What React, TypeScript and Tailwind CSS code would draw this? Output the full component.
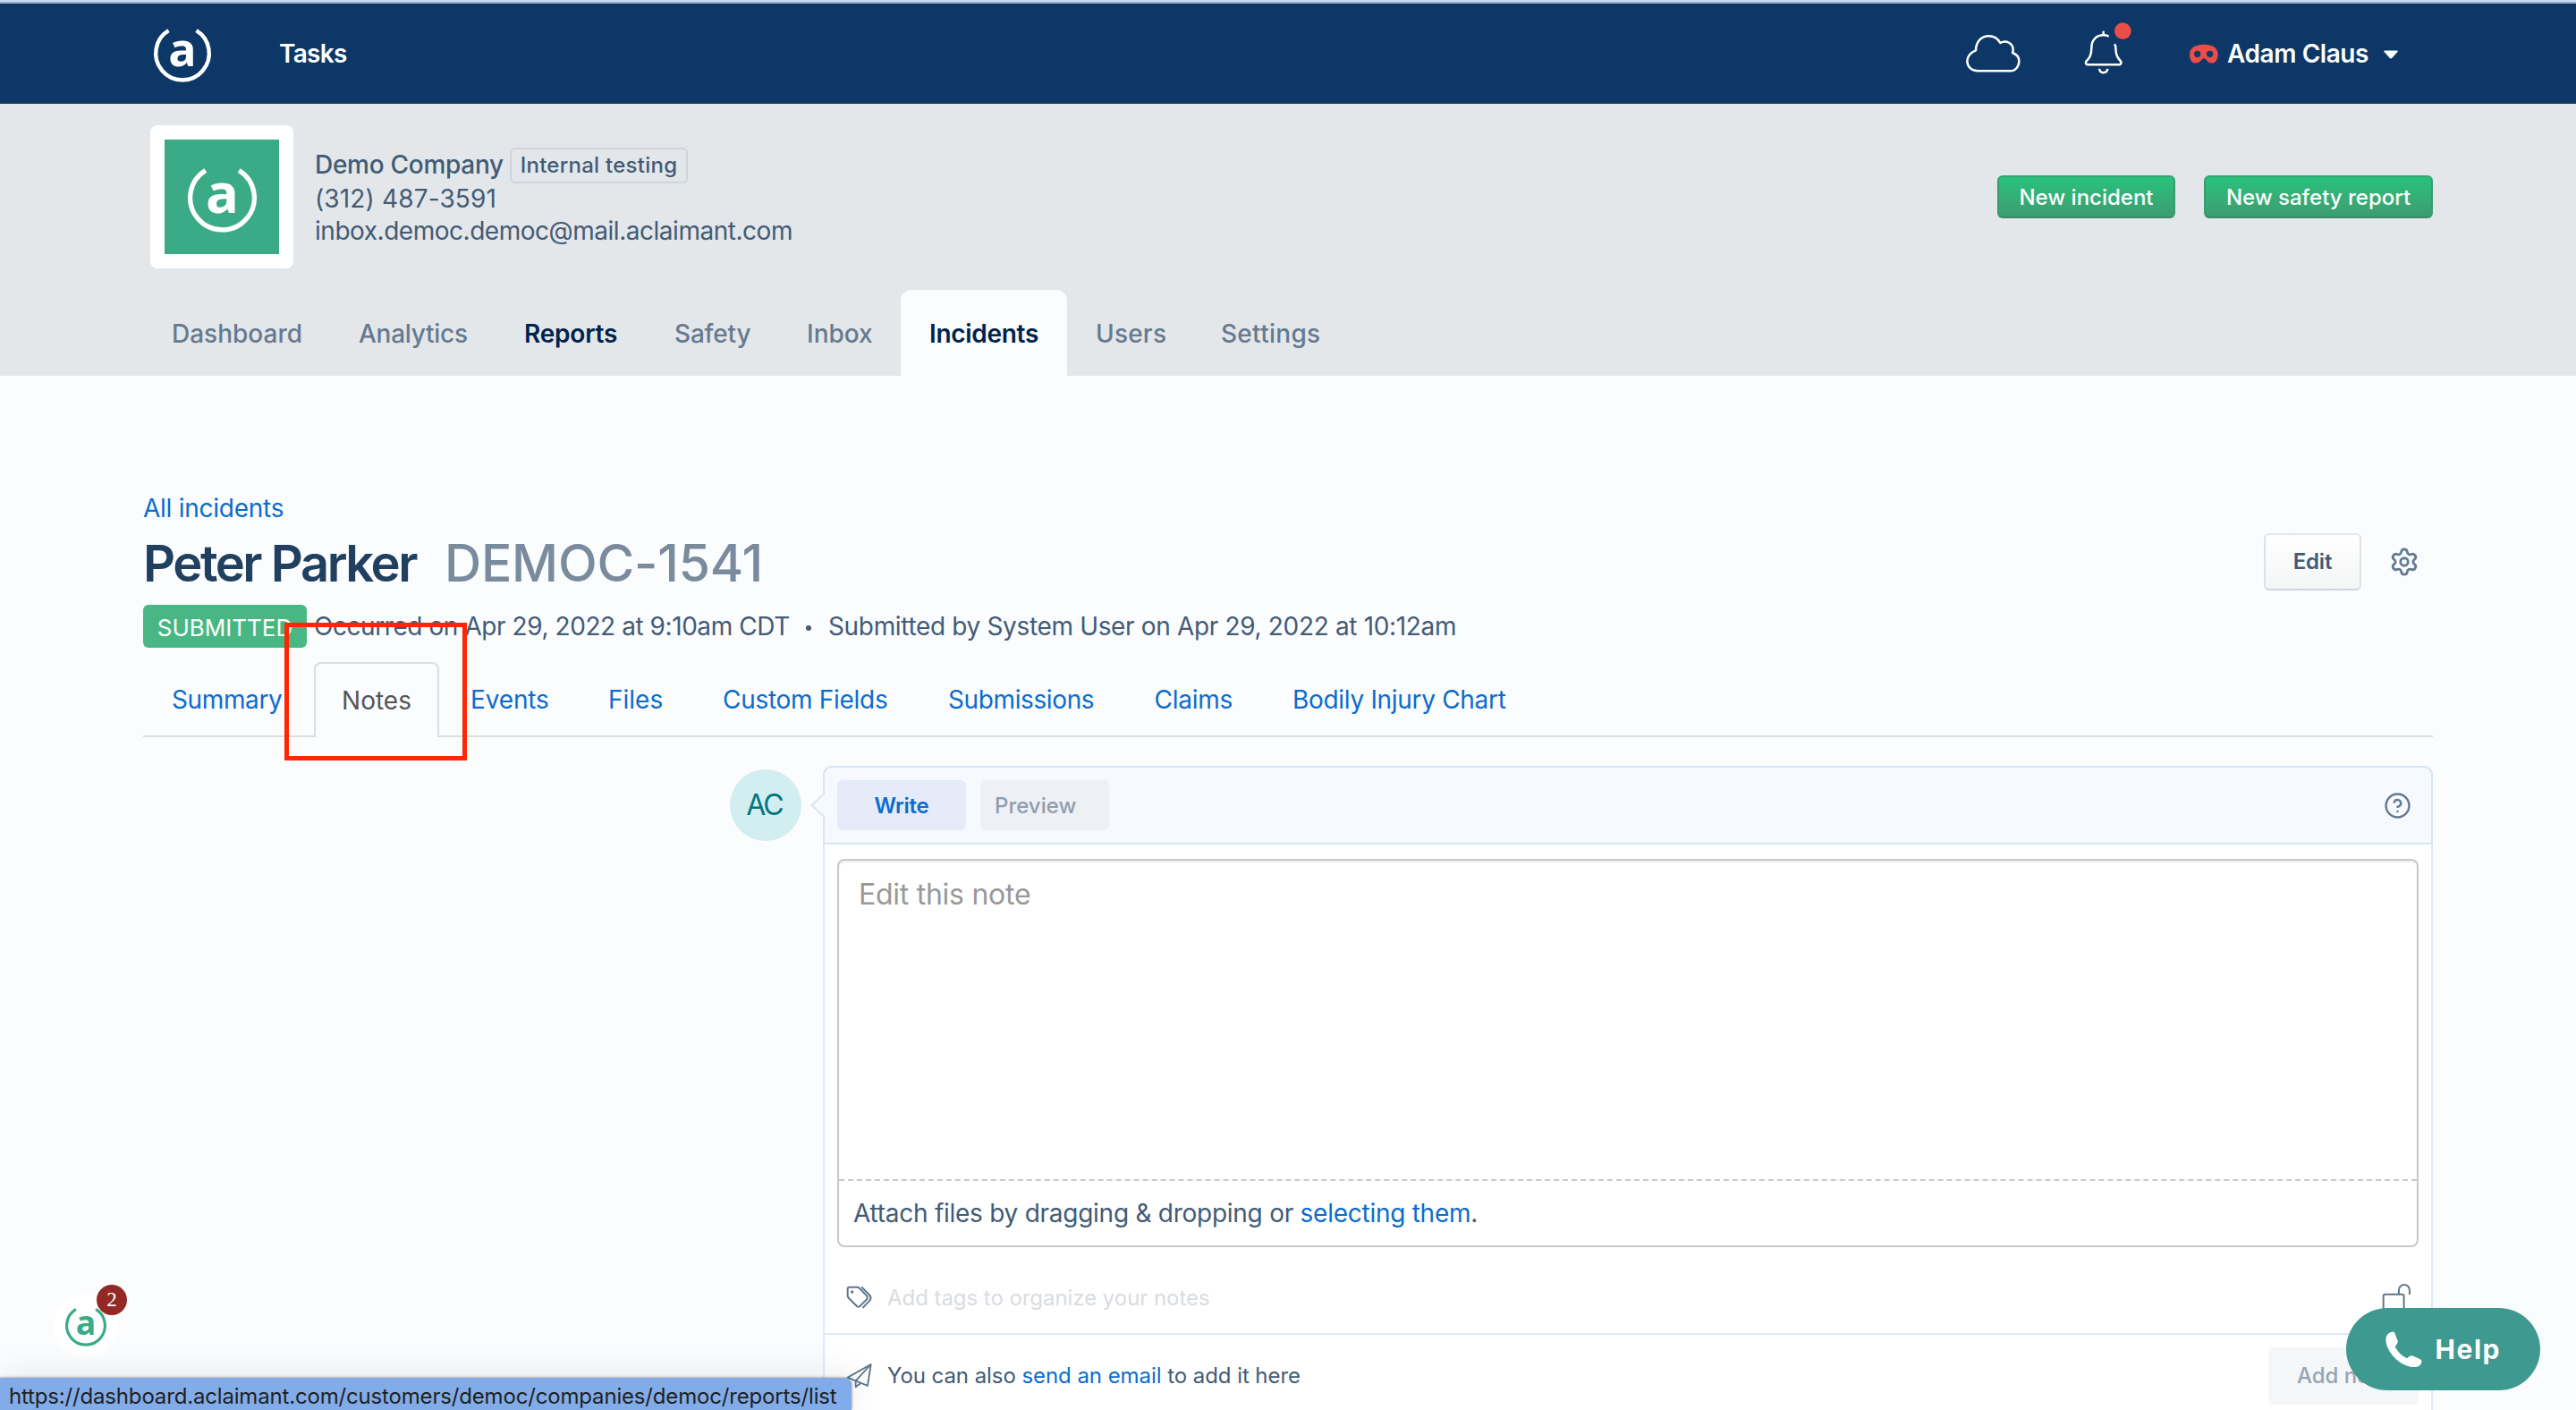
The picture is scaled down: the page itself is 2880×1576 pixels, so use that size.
import type { ReactNode } from "react";
import { CircleHelp, Settings } from "lucide-react";

function Logo({ className, letter = 52, stroke = 4.4 }: { className: string; letter?: number; stroke?: number }) {
  return (
    <svg viewBox="0 0 64 64" className={`overflow-visible ${className}`} fill="none">
      <path d="M16.5 6.2A29.8 29.8 0 1 0 47.5 6.2" stroke="currentColor" strokeWidth={stroke} />
      <text
        x="32"
        y="45.6"
        textAnchor="middle"
        fontSize={letter}
        fontWeight="700"
        fill="currentColor"
        className="font-['Open_Sans',sans-serif]"
      >
        a
      </text>
    </svg>
  );
}

function CloudIcon() {
  return (
    <svg viewBox="56 66 183 132" className="h-11 w-[61px]" fill="none" stroke="#fff" strokeWidth="7.5" strokeLinejoin="round">
      <path d="M95 190C75 190 60 176 60 157C60 141 73 126 89 121C89 92 108 73 132 73C150 73 163 82 171 96C190 84 214 97 214 119C214 123 213 126 212 129C226 134 234 144 234 157C234 176 221 190 205 190Z" />
    </svg>
  );
}

function BellIcon() {
  return (
    <svg viewBox="454 28 162 178" className="h-[59.3px] w-[54px]" fill="none" stroke="#fff" strokeWidth="7.5" strokeLinecap="round">
      <path d="M519 63V72" />
      <path
        strokeLinecap="butt"
        strokeLinejoin="round"
        d="M537 78Q529 74 519 74C495 74 479 90 479 115C479 140 473 150 461 162C458 167 460 173 466 173H572C578 173 580 167 577 162C565 148 560 138 560 116Q560 109 556 104"
      />
      <path strokeLinecap="butt" d="M505 187C507 204 531 204 533 187" />
      <circle cx="584" cy="60" r="28" fill="#eb4d49" stroke="none" />
    </svg>
  );
}

function MaskIcon() {
  return (
    <svg viewBox="806 98 96 68" className="h-[22.6px] w-8" fill="#eb4d49">
      <path
        fillRule="evenodd"
        d="M854 100C885 100 901 112 901 133C901 150 893 163 881 163C866 163 862 147 854 147C846 147 842 163 826 163C813 163 806 150 806 133C806 112 823 100 854 100ZM821 132a11 11 0 1 0 22 0a11 11 0 1 0 -22 0ZM863 132a11 11 0 1 0 22 0a11 11 0 1 0 -22 0Z"
      />
    </svg>
  );
}

function TagsIcon() {
  return (
    <svg viewBox="438 50 90 80" className="h-[26.7px] w-[30px]" fill="none" stroke="#5f768c" strokeWidth="6" strokeLinecap="round" strokeLinejoin="round">
      <path d="M443 61Q443 55 449 55H474Q479 55 482 58L507 84Q512 90 507 96L484 119Q479 123 474 119L447 92Q443 88 443 83Z" />
      <path d="M491 56L517 82Q524 91 517 100L495 123" />
      <circle cx="458" cy="71" r="5" fill="#5f768c" stroke="none" />
    </svg>
  );
}

function SendIcon() {
  return (
    <svg viewBox="438 310 90 88" className="h-[29.3px] w-[30px]" fill="none" stroke="#5f768c" strokeWidth="5.5" strokeLinejoin="round">
      <path d="M443 360L521 316L510 388L443 360Z" />
      <path d="M521 316L470 371V392L487 379" />
    </svg>
  );
}

function UnlockIcon() {
  return (
    <svg viewBox="672 165 98 98" className="size-[32.6px]" fill="none" stroke="#5f768c" strokeWidth="6">
      <rect x="677" y="203" width="69" height="56" rx="6" />
      <path d="M729 203V189A18 18 0 0 1 765 189V204" />
    </svg>
  );
}

function PhoneIcon() {
  return (
    <svg viewBox="680 322 122 122" className="size-[40.6px]" fill="#fff">
      <path d="M698 325Q708 321 711 328L721 354Q723 360 712 374Q726 401 752 413Q762 402 770 404L797 416Q803 419 801 428Q795 444 772 443C728 438 682 392 681 348Q682 331 698 325Z" />
    </svg>
  );
}

const sections: [string, string][] = [
  ["Dashboard", "w-[210px] pl-8"],
  ["Analytics", "w-[184px] pl-[31px] tracking-[-0.27px]"],
  ["Reports", "w-[168px] pl-8 font-semibold tracking-[-0.2px] text-[#00234b]"],
  ["Safety", "w-[148px] pl-8 tracking-[-0.2px]"],
  ["Inbox", "w-[137px] pl-8"],
  ["Incidents", "w-[186px] justify-center rounded-t-xl bg-[#fbfcfe] font-semibold tracking-[-0.29px] text-[#00234b]"],
  ["Users", "w-[141px] pl-8 tracking-[0.2px]"],
  ["Settings", "pl-[31px] tracking-[0.28px]"],
];

const tabs: [string, string][] = [
  ["Summary", "w-[191px] pl-8 tracking-[-0.38px]"],
  ["Notes", "w-[140px] justify-center rounded-t-lg border-2 border-b-0 border-[#dcdddf] bg-[#fbfcfe] text-[#555]"],
  ["Events", "w-[154px] pl-[35px] tracking-[-0.15px]"],
  ["Files", "w-[129px] pl-[35px]"],
  ["Custom Fields", "w-[251px] pl-[34px] tracking-[-0.29px]"],
  ["Submissions", "w-[231px] pl-[35px] tracking-[-0.38px]"],
  ["Claims", "w-[154px] pl-[34.5px] tracking-[-0.25px]"],
  ["Bodily Injury Chart", "pl-[35px] tracking-[-0.31px]"],
];

function GreenButton({ className, children }: { className: string; children: ReactNode }) {
  return (
    <button
      className={`flex h-12 items-center justify-center rounded-md border-2 border-t-[#33a474] border-x-[#379c70] border-b-[#3a8a68] bg-linear-to-b from-[#26c27c] to-[#3c9c70] pt-0.5 text-2xl font-medium whitespace-nowrap text-white ${className}`}
    >
      {children}
    </button>
  );
}

function NavBar() {
  return (
    <nav className="flex h-28 items-center bg-[#0c3766] text-[28px] font-semibold text-white">
      <Logo className="ml-[172px] size-16" />
      <span className="ml-[76px] tracking-[-0.7px]">Tasks</span>
      <div className="mr-[199px] ml-auto flex items-center">
        <CloudIcon />
        <div className="-mt-[12px] ml-[71px]">
          <BellIcon />
        </div>
        <div className="ml-16 flex items-center">
          <MaskIcon />
          <span className="ml-2.5 tracking-[-0.44px]">Adam Claus</span>
          <svg viewBox="0 0 16 10" className="mt-0.5 ml-[17px] h-2.5 w-4" fill="#fff">
            <path d="M1 0.5H15Q16.2 1 15.2 2.2L9.4 8.8Q8 10.2 6.6 8.8L0.8 2.2Q-0.2 1 1 0.5Z" />
          </svg>
        </div>
      </div>
    </nav>
  );
}

function CompanyHeader() {
  return (
    <header className="flex h-[304px] flex-col justify-between bg-[#e4e7ea] pt-6">
      <div className="flex h-40 items-center pr-40 pl-[168px]">
        <div className="size-40 shrink-0 rounded-lg bg-white p-4">
          <div className="flex size-full items-center justify-center bg-[#3aab86] text-white">
            <Logo className="mt-0.5 size-[77px]" letter={51} stroke={4.4} />
          </div>
        </div>
        <div className="ml-6 text-[28px] text-[#425b76]">
          <div className="flex h-10 items-center">
            <span className="w-[218px] font-medium tracking-[-0.28px]">Demo Company</span>
            <span className="mt-0.5 flex h-10 w-[199px] shrink-0 items-center justify-center rounded-md border-2 border-[#cfd4dc] text-2xl font-medium tracking-[0.25px]">
              Internal testing
            </span>
          </div>
          <div className="h-9 leading-9 tracking-[0.15px]">(312) 487-3591</div>
          <div className="h-9 leading-9 tracking-[-0.47px]">inbox.democ.democ@mail.aclaimant.com</div>
        </div>
        <div className="ml-auto flex gap-8">
          <GreenButton className="w-[199px]">New incident</GreenButton>
          <GreenButton className="w-64">New safety report</GreenButton>
        </div>
      </div>
      <div className="flex h-24 pl-40 text-[28px] font-medium text-[#657a90]">
        {sections.map(([label, cls]) => (
          <a key={label} className={`flex items-center pt-px whitespace-nowrap ${cls}`}>
            {label}
          </a>
        ))}
      </div>
    </header>
  );
}

function IncidentHeading() {
  return (
    <div className="flex flex-col pt-[130px]">
      <a className="h-9 text-[28px] leading-9 tracking-[-0.25px] text-[#0c6ccb]">All incidents</a>
      <div className="mt-2.5 flex h-16 items-center">
        <h1 className="flex items-baseline pt-[3px] leading-none">
          <span className="w-[337px] text-[56px] font-semibold tracking-[-2.45px] text-[#21405f]">Peter Parker</span>
          <span className="text-[57px] font-medium tracking-[-0.2px] text-[#7a8b9d]">DEMOC-1541</span>
        </h1>
        <button className="ml-auto flex h-16 w-[109px] items-center justify-center rounded-md border-2 border-t-[#e4e6e9] border-x-[#dde1e5] border-b-[#d0d5da] bg-linear-to-b from-white to-[#f4f5f5] text-2xl font-semibold tracking-[-0.2px] text-[#425b76]">
          Edit
        </button>
        <Settings className="mr-[15px] ml-[31px] size-[34px] text-[#657a90]" strokeWidth={2} />
      </div>
      <div className="mt-4 flex h-12 items-center text-[28px] text-[#425b76]">
        <span className="flex h-12 w-[183px] items-center justify-center rounded-md bg-[#48b783] pt-0.5 text-[26px] text-white">
          SUBMITTED
        </span>
        <span className="w-[551px] pl-2 tracking-[-0.43px] whitespace-nowrap">Occurred on Apr 29, 2022 at 9:10am CDT</span>
        <span className="mt-1 ml-[7px] size-1.5 rounded-full bg-[#425b76]" />
        <span className="ml-[19px] tracking-[-0.34px]">Submitted by System User on Apr 29, 2022 at 10:12am</span>
      </div>
    </div>
  );
}

function Tabs() {
  return (
    <div className="relative mt-4 flex h-21 text-[28px] text-[#0c6ccb] before:absolute before:inset-x-0 before:bottom-0 before:h-0.5 before:bg-[#dcdddf]">
      {tabs.map(([label, cls]) => (
        <a key={label} className={`relative flex items-center whitespace-nowrap ${cls}`}>
          {label}
        </a>
      ))}
      <div className="absolute -top-11 left-[158px] h-[154px] w-51 border-5 border-[#ff2600]" />
    </div>
  );
}

function NoteEditor() {
  return (
    <div className="mt-8 flex justify-end">
      <div className="mt-1 mr-6 flex size-20 items-center justify-center rounded-full bg-[#d2eef1] pr-[3px] text-[32px] tracking-[-2px] text-[#00757f]">
        AC
      </div>
      <div className="relative w-[1800px] rounded-t-[10px] border-2 border-[#ddeaf8] bg-white">
        <svg viewBox="0 0 17 30" className="absolute top-[27px] -left-4 h-[30px] w-[17px]" fill="#f6f9fe">
          <path d="M16.5 1L1.5 15L16.5 29" stroke="#d9e6f6" strokeWidth="2" />
        </svg>
        <div className="-mx-0.5 -mt-0.5 flex h-22 items-center rounded-t-[10px] border-2 border-[#d7e5f6] bg-[#f6f9fe] px-3.5 text-2xl">
          <button className="flex h-14 w-36 items-center justify-center rounded-md bg-[#e5ebf9] pt-px font-semibold tracking-[-0.2px] text-[#0c6ccb]">
            Write
          </button>
          <button className="ml-4 flex h-14 w-36 items-center rounded-md bg-[#edf0f4] pt-px pl-4 font-medium text-[#909dad]">
            Preview
          </button>
          <CircleHelp className="mr-2 ml-auto size-[31px] text-[#657a90]" strokeWidth={1.9} />
        </div>
        <div className="mx-3.5 mt-4 flex h-[434px] flex-col rounded-lg border-2 border-[#c9c9c9] shadow-[inset_0_2px_2px_rgba(0,0,0,0.07)]">
          <div className="flex-1 pt-[18px] pl-[22px] text-[32px] leading-10 tracking-[-0.26px] text-[#999]">Edit this note</div>
          <div className="h-[74px] border-t-2 border-dashed border-[#c9c9c9] pl-4 text-[28px] leading-[73px] tracking-[-0.26px] text-[#425b76]">
            Attach files by dragging &amp; dropping or <a className="text-[#0c6ccb]">selecting them</a>.
          </div>
        </div>
        <div className="flex h-[96px] items-center pt-[17px] pl-6 text-2xl tracking-[-0.05px] text-[#d8dce0]">
          <TagsIcon />
          <span className="ml-4">Add tags to organize your notes</span>
          <span className="mr-[22px] ml-auto">
            <UnlockIcon />
          </span>
        </div>
        <div className="flex h-[94px] items-center border-t-2 border-[#deeaf7] pl-6 text-2xl tracking-[-0.06px] text-[#425b76]">
          <SendIcon />
          <span className="ml-4">
            You can also <a className="text-[#0c6ccb]">send an email</a> to add it here
          </span>
          <span className="mr-3.5 ml-auto flex h-16 w-42 items-center rounded-md bg-[#f5f6f8] pl-8 font-medium text-[#98a4b2]">
            Add note
          </span>
        </div>
        <div className="h-10" />
      </div>
    </div>
  );
}

export default function App() {
  return (
    <div className="relative h-[1576px] w-[2880px] overflow-hidden bg-[#fbfcfe] font-['Inter',sans-serif]">
      <div className="h-1 border-b-2 border-[#9fafcb] bg-[#c6d9f6]" />
      <NavBar />
      <CompanyHeader />
      <main className="px-40">
        <IncidentHeading />
        <Tabs />
        <NoteEditor />
      </main>

      <div className="absolute top-[1446px] left-[60px] flex size-[72px] items-center justify-center rounded-full bg-white">
        <Logo className="size-[46px] text-[#3aab86]" />
        <span className="absolute -top-[10px] left-12 flex size-[34px] items-center justify-center rounded-full bg-[#932924] font-['Liberation_Serif',serif] text-[23px] text-white">
          2
        </span>
      </div>

      <div className="absolute top-[1462px] left-[2623px] flex h-[92px] w-[217px] items-center rounded-full bg-[#3e9991] pl-11 text-[30px] font-bold tracking-[1.5px] text-white">
        <PhoneIcon />
        <span className="ml-[15px]">Help</span>
      </div>

      <div className="absolute bottom-0 left-0 flex h-9 w-[952px] items-center rounded-tr-lg bg-[#82ace9] pt-[5px] pl-2.5 text-2xl tracking-[-0.17px] whitespace-nowrap text-[#1d1f22] shadow-[0_0_3px_rgba(0,0,0,0.5),0_0_40px_rgba(0,0,0,0.1)]">
        https://dashboard.aclaimant.com/customers/democ/companies/democ/reports/list
      </div>
    </div>
  );
}
